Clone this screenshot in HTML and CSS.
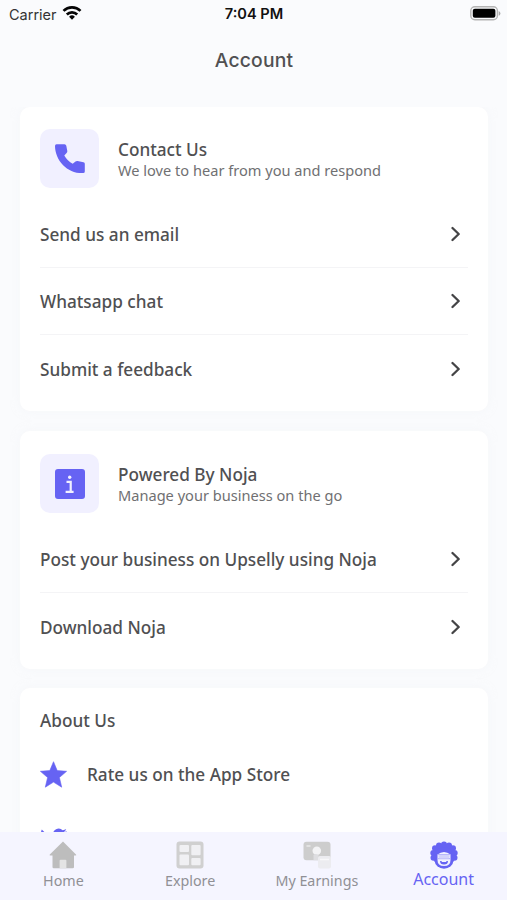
FILE: index.html
```
<!DOCTYPE html>
<html lang="en">
<head>
<meta charset="utf-8">
<title>Account</title>
<link rel="stylesheet" href="styles.css">
</head>
<body>
<div class="app">
  <header class="status">
    <div class="carrier"><span>Carrier</span>
      <svg width="20" height="16" viewBox="0 0 20 16"><g fill="none" stroke="#050505" stroke-width="2.7"><path d="M1.5 5.9a12.2 12.2 0 0 1 17 0"/><path d="M4.8 9.5a7.4 7.4 0 0 1 10.4 0"/></g><path d="M7.1 11.8a4.1 4.1 0 0 1 5.8 0L10 14.8z" fill="#050505"/></svg>
    </div>
    <div class="time">7:04 PM</div>
    <svg class="battery" width="31" height="15" viewBox="0 0 31 15"><rect x=".8" y=".8" width="26.6" height="13" rx="4" fill="#fafbfd" stroke="#b4b4b4" stroke-width="1.4"/><rect x="2.8" y="2.8" width="22.6" height="9" rx="2" fill="#000"/><path d="M28.7 5v4.800q1.700-.8 1.700-2.400t-1.700-2.400z" fill="#aaa"/></svg>
  </header>
  <h1 class="title">Account</h1>
  <main class="content">
    <section class="card">
      <div class="intro">
        <div class="tile"><svg width="30" height="30" viewBox="0 0 30 30"><path d="M1.500.300h8q1.500 0 1.800 1.500l1 5.100q.2 1.200-.7 2L9.300 11.500q3.200 5.600 8.400 8.300l2.800-2.200q.8-.8 2-.6l6 1.200q1.300.3 1.300 1.600v7.700q0 1.600-1.600 1.600C12.400 29.600.2 16.600 0 1.900Q0 .300 1.500.300z" fill="#6663f3"/></svg></div>
        <div class="copy"><h2>Contact Us</h2><p>We love to hear from you and respond</p></div>
      </div>
      <div class="row"><span>Send us an email</span><svg class="chev" viewBox="0 0 10 16"><path d="M1.500 2L7.700 8l-6.200 6"/></svg></div>
      <div class="row"><span>Whatsapp chat</span><svg class="chev" viewBox="0 0 10 16"><path d="M1.500 2L7.700 8l-6.200 6"/></svg></div>
      <div class="row"><span>Submit a feedback</span><svg class="chev" viewBox="0 0 10 16"><path d="M1.500 2L7.700 8l-6.200 6"/></svg></div>
    </section>
    <section class="card powered">
      <div class="intro">
        <div class="tile"><svg width="30" height="30" viewBox="0 0 30 30"><rect width="30" height="30" rx="3" fill="#6663f3"/><circle cx="14.700" cy="8.300" r="1.700" fill="#f1f0ff"/><path d="M11.500 12.900h4.200v9.400M10.600 22.800h8" fill="none" stroke="#f1f0ff" stroke-width="2.200"/></svg></div>
        <div class="copy"><h2>Powered By Noja</h2><p>Manage your business on the go</p></div>
      </div>
      <div class="row"><span>Post your business on Upselly using Noja</span><svg class="chev" viewBox="0 0 10 16"><path d="M1.500 2L7.700 8l-6.200 6"/></svg></div>
      <div class="row"><span>Download Noja</span><svg class="chev" viewBox="0 0 10 16"><path d="M1.500 2L7.700 8l-6.200 6"/></svg></div>
    </section>
    <section class="card about">
      <h2>About Us</h2>
      <div class="link"><svg width="27" height="27" viewBox="0 0 27 27"><path d="M13.500.700l3.700 8.900 9.400.7-7.200 6.200 2.300 9.700-8.200-5.100-8.200 5.100 2.300-9.700L.4 10.300l9.400-.7z" fill="#6663f3" stroke="#6663f3" stroke-width=".6" stroke-linejoin="round"/></svg><span>Rate us on the App Store</span></div>
      <div class="link bird"><svg width="27" height="27" viewBox="0 0 24 24"><path d="M23.950 4.570a10 10 0 0 1-2.820.770 4.960 4.960 0 0 0 2.160-2.720c-.950.550-2 .950-3.130 1.190a4.920 4.920 0 0 0-8.380 4.480C7.690 8.100 4.070 6.130 1.640 3.160a4.930 4.930 0 0 0 1.520 6.570 4.900 4.900 0 0 1-2.230-.620v.060a4.920 4.920 0 0 0 3.950 4.830 5 5 0 0 1-2.210.080 4.940 4.940 0 0 0 4.600 3.420A9.870 9.870 0 0 1 0 19.540a14 14 0 0 0 7.550 2.210c9.050 0 14-7.500 14-14v-.640a10 10 0 0 0 2.400-2.540z" fill="#6663f3"/></svg></div>
    </section>
  </main>
  <nav class="tabs">
    <div class="tab"><svg width="28" height="28" viewBox="0 0 28 28"><path d="M14 .600L27 13.500q.8 1-.5 1.100H25V26q0 1.300-1.300 1.300H4.800q-1.300 0-1.300-1.300V14.600H1.300Q0 14.500.8 13.500z" fill="#bdbdbd"/><path d="M10.600 27.300v-7.500q0-1 1-1h4.800q1 0 1 1v7.500z" fill="#e4e4e4"/></svg><span>Home</span></div>
    <div class="tab"><svg width="28" height="28" viewBox="0 0 28 28"><rect x=".5" y=".5" width="27" height="27" rx="3" fill="#d0d0d0"/><g fill="#f0f0f3"><rect x="3.500" y="4" width="9.500" height="7" rx="1"/><rect x="15.300" y="4" width="9.300" height="10.300" rx="1"/><rect x="3.500" y="13.500" width="9.500" height="10.800" rx="1"/><rect x="15.300" y="17" width="9.300" height="7.300" rx="1"/></g></svg><span>Explore</span></div>
    <div class="tab"><svg width="28" height="28" viewBox="0 0 28 28"><rect x=".5" y=".8" width="27" height="18.500" rx="3" fill="#cdcdcd"/><path d="M3.500 5h4" stroke="#eee" stroke-width="1.300"/><circle cx="13.800" cy="9.800" r="4.300" fill="#f3f3f5"/><path d="M10.500 14q2-2 5 0v5.300h-5z" fill="#dedee1"/><rect x="15" y="15" width="13" height="12.500" rx="2" fill="#ececf0"/><path d="M17 18.500h9" stroke="#f8f8fa" stroke-width="1.500"/></svg><span>My Earnings</span></div>
    <div class="tab active"><svg width="28" height="28" viewBox="0 0 28 28"><g fill="#6663f3"><circle cx="14" cy="14" r="11.500"/><circle cx="14" cy="3.400" r="3"/><circle cx="9" cy="4.400" r="3"/><circle cx="5" cy="7.300" r="3"/><circle cx="3.300" cy="12" r="3"/><circle cx="3.500" cy="16.800" r="3"/><circle cx="19" cy="4.400" r="3"/><circle cx="23" cy="7.300" r="3"/><circle cx="24.700" cy="12" r="3"/><circle cx="24.500" cy="16.800" r="3"/><ellipse cx="14" cy="19.500" rx="9.300" ry="8.300"/></g><path d="M7.500 13.500q3-2.500 6.500-2.500t6.500 2.500v5.500q0 6-6.500 6t-6.500-6z" fill="#f1f1ff"/><path d="M7.500 13.700h13M7.500 17.700h13" stroke="#aaa9fa" stroke-width="1"/><rect x="8.500" y="14" width="11" height="3.400" rx="1.500" fill="#d3d3fb"/><path d="M10 20h8q0 3.500-4 3.500T10 20z" fill="#6663f3"/><path d="M11.700 20h4.600v1h-4.600z" fill="#f4f4ff"/></svg><span>Account</span></div>
  </nav>
</div>
</body>
</html>
```

FILE: styles.css
```
* { box-sizing: border-box; }
body { margin: 0; font-family: "Noto Sans", sans-serif; color: #505052; background: #fafbfd; }
h1, h2, p { margin: 0; font-weight: 500; }
svg { display: block; flex: none; }
.app { width: 507px; height: 900px; overflow: hidden; display: flex; flex-direction: column; }
.status { height: 28px; flex: none; display: grid; grid-template-columns: 1fr auto 1fr; align-items: center; padding: 0 6px 0 9px; font-family: Inter, sans-serif; color: #111; }
.carrier { display: flex; align-items: center; gap: 5px; font-size: 14.500px; color: #333; }
.carrier svg { margin: -3px 0 0 0; }
.time { font-size: 14.600px; font-weight: 600; margin-left: -2px; }
.battery { justify-self: end; margin-top: -2px; }
.title { flex: none; height: 79px; padding: 19px 0 0 1px; text-align: center; font: 500 19.300px/26px Inter, sans-serif; letter-spacing: .2px; }
.content { flex: 1; min-height: 0; overflow: hidden; padding: 0 19px 0 20px; }
.card { height: 304px; padding: 22px 20px 0; background: #fff; border-radius: 10px; margin-bottom: 20px; box-shadow: 0 0 9px #f4f6f880; }
.intro { height: 72px; display: flex; gap: 19px; }
.tile { width: 59px; height: 59px; border-radius: 10px; background: #f1f0ff; display: grid; place-items: center; }
.copy { padding-top: 9px; }
h2 { font-size: 17.200px; line-height: 23px; }
.copy p { font-size: 14.600px; line-height: 19px; font-weight: 400; color: #707072; }
.row { height: 67px; display: flex; align-items: center; justify-content: space-between; font-size: 17.200px; font-weight: 500; border-bottom: 1px solid #f4f4f6; }
.row span { padding-top: 1px; }
.row:last-child { border-bottom: 0; }
.chev { width: 10px; height: 16px; margin-right: 7px; }
.chev path { fill: none; stroke: #444446; stroke-width: 2.300; stroke-linecap: round; stroke-linejoin: round; }
.powered { height: 238px; padding-top: 23px; margin-bottom: 19px; }
.about { height: 300px; padding-top: 21px; }
.link { display: flex; align-items: center; gap: 20px; height: 64px; font-size: 17.200px; font-weight: 500; }
.bird { padding-top: 2px; }
.about h2 { margin-bottom: 10px; }
.tabs { flex: none; height: 68px; display: grid; grid-template-columns: repeat(4, 1fr); background: #f5f5ff; }
.tab { display: flex; flex-direction: column; align-items: center; padding-top: 9px; font-size: 14.300px; line-height: 24px; color: #909095; }
.tab.active { color: #6663f3; font-size: 16px; line-height: 21px; }
```
